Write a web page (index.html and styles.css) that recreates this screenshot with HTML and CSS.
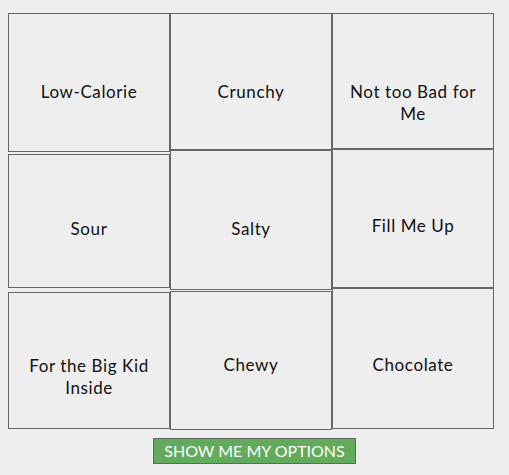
FILE: index.html
```html
<!DOCTYPE html>
<html>
<head>
<meta charset="utf-8">
<link rel="stylesheet" href="styles.css">
</head>
<body>
<div class="board">
  <div class="col">
    <div class="card h139">Low-Calorie</div>
    <div class="card h134 gap2 tight">Sour</div>
    <div class="card h137 gap4 low">For the Big Kid Inside</div>
  </div>
  <div class="col">
    <div class="card h137">Crunchy</div>
    <div class="card h140">Salty</div>
    <div class="card h139 gap1 low">Chewy</div>
  </div>
  <div class="col">
    <div class="card h136">Not too Bad for Me</div>
    <div class="card h139 mid">Fill Me Up</div>
    <div class="card h141 mid">Chocolate</div>
  </div>
</div>
<div class="actions">
  <button class="go">SHOW ME MY OPTIONS</button>
</div>
</body>
</html>
```

FILE: styles.css
```css
html, body {
  background: #eeeeee;
}
body {
  margin: 8px;
  font-family: Lato, "Open Sans", sans-serif;
  color: #111;
}
.board {
  display: grid;
  grid-template-columns: repeat(3, 162px);
  margin-top: 5px;
  width: 486px;
}
.col {
  display: flex;
  flex-direction: column;
}
.card {
  box-sizing: border-box;
  border: 1px solid #666;
  text-align: center;
  font-size: 17px;
  line-height: 22px;
  letter-spacing: 0.6px;
  padding: 67px 12px 0;
}
.card.tight { padding-top: 63px; }
.card.low { padding-top: 62px; }
.card.mid { padding-top: 65px; }
.gap1 { margin-top: 1px; }
.gap2 { margin-top: 2px; }
.gap4 { margin-top: 4px; }
.h134 { height: 134px; }
.h136 { height: 136px; }
.h137 { height: 137px; }
.h139 { height: 139px; }
.h140 { height: 140px; }
.h141 { height: 141px; }
.actions {
  display: flex;
  justify-content: center;
  margin-top: 8px;
}
.go {
  width: 203px;
  height: 26px;
  background: #62aa5c;
  color: #fff;
  border: 1px solid #666;
  font-family: Lato, "Open Sans", sans-serif;
  font-size: 16px;
  padding: 0;
  line-height: 24px;
}
```
